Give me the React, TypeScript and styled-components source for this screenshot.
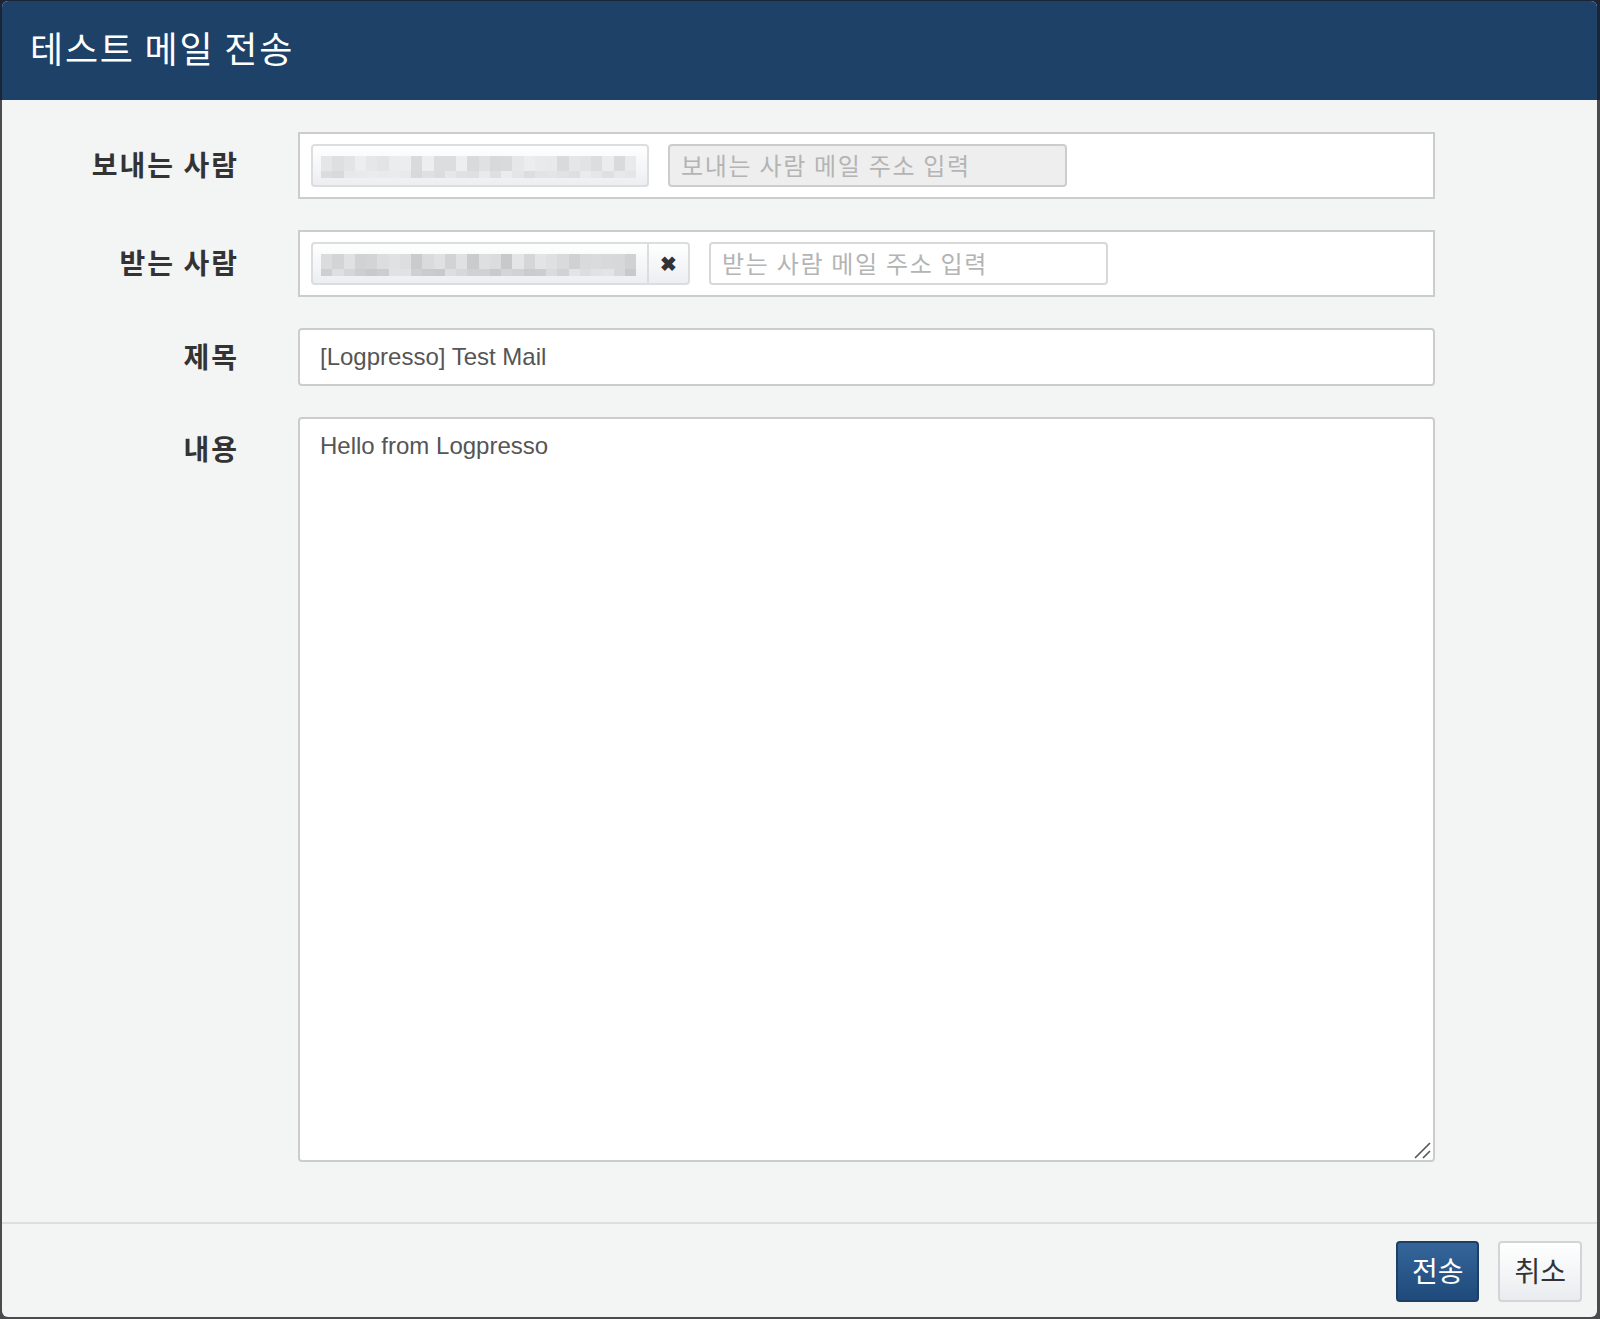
import React from 'react'
import styled, { createGlobalStyle } from 'styled-components'

const GlobalStyle = createGlobalStyle`
  html, body {
    margin: 0;
    padding: 0;
    background: #3b3d40;
  }
  body {
    font-family: "Liberation Sans", "Noto Sans CJK KR", sans-serif;
  }
`

const Backdrop = styled.div`
  width: 1600px;
  height: 1319px;
  padding: 1px 3px 2px 2px;
  box-sizing: border-box;
  background: linear-gradient(#1b2533 0 100px, #4a4b4d 100px);
`

const Modal = styled.div`
  width: 1595px;
  height: 1316px;
  border-radius: 6px;
  overflow: hidden;
  background: #f3f4f4;
  display: flex;
  flex-direction: column;
`

const Header = styled.div`
  height: 99px;
  flex: none;
  background: #1e4168;
  display: flex;
  align-items: center;
  padding-left: 28px;
  padding-bottom: 8px;
  box-sizing: border-box;
`

const Title = styled.h1`
  margin: 0;
  font-family: "Noto Sans CJK KR", sans-serif;
  font-size: 36px;
  font-weight: 400;
  color: #ffffff;
  letter-spacing: 1.8px;
`

const Body = styled.div`
  flex: 1;
  padding-top: 32px;
`

const Form = styled.div`
  display: grid;
  grid-template-columns: 235px 1137px;
  column-gap: 61px;
  row-gap: 31px;
`

const Label = styled.label<{ $top?: boolean }>`
  font-family: "Noto Sans CJK KR", sans-serif;
  font-size: 28px;
  font-weight: 700;
  color: #333333;
  text-align: right;
  line-height: 58px;
  letter-spacing: 2px;
  margin-right: -2px;
  align-self: ${(p) => (p.$top ? 'start' : 'center')};
  margin-top: ${(p) => (p.$top ? '2px' : '-3px')};
`

const TagBox = styled.div`
  height: 67px;
  box-sizing: border-box;
  border: 2px solid #cccccc;
  background: #ffffff;
  padding: 10px 11px;
  display: flex;
  align-items: center;
`

const Tag = styled.div<{ $removable?: boolean }>`
  width: 338px;
  height: 43px;
  box-sizing: border-box;
  border: 2px solid #dcdddf;
  border-radius: ${(p) => (p.$removable ? '4px 0 0 4px' : '4px')};
  background: linear-gradient(#ffffff, #eceef1);
  padding: 10px 11px 0 8px;
`

const Mosaic = styled.div`
  display: grid;
  grid-template-columns: repeat(28, 1fr);
  grid-template-rows: 15px 7px;
  width: 315px;
`

const Cell = styled.div<{ $shade: number }>`
  background: ${(p) => `rgb(${p.$shade}, ${p.$shade + 1}, ${p.$shade + 3})`};
`

const RemoveButton = styled.button`
  width: 41px;
  height: 43px;
  box-sizing: border-box;
  border: 2px solid #dcdddf;
  border-left: none;
  border-radius: 0 4px 4px 0;
  background: linear-gradient(#ffffff, #eceef1);
  color: #333333;
  font-size: 20px;
  font-weight: 700;
  padding: 0;
  display: flex;
  align-items: center;
  justify-content: center;
`

const AddressInput = styled.input<{ $disabled?: boolean }>`
  width: 399px;
  height: 43px;
  margin-left: 19px;
  box-sizing: border-box;
  border: 2px solid ${(p) => (p.$disabled ? '#cccccc' : '#d8d8d8')};
  border-radius: 4px;
  background: ${(p) => (p.$disabled ? '#eeeeee' : '#ffffff')};
  padding: 0 11px 3px;
  font-family: "Noto Sans CJK KR", sans-serif;
  font-size: 24px;
  letter-spacing: 1.7px;
  outline: none;

  &::placeholder {
    color: #b4b4b4;
  }
`

const TextInput = styled.input`
  height: 58px;
  box-sizing: border-box;
  border: 2px solid #cccccc;
  border-radius: 4px;
  background: #ffffff;
  padding: 0 20px;
  font-family: "Liberation Sans", "Noto Sans CJK KR", sans-serif;
  font-size: 24px;
  color: #555555;
  outline: none;
`

const TextAreaWrap = styled.div`
  position: relative;
  display: flex;
`

const TextArea = styled.textarea`
  flex: 1;
  height: 745px;
  box-sizing: border-box;
  border: 2px solid #cccccc;
  border-radius: 4px;
  background: #ffffff;
  padding: 12px 20px;
  font-family: "Liberation Sans", "Noto Sans CJK KR", sans-serif;
  font-size: 24px;
  line-height: 30px;
  color: #555555;
  outline: none;
  resize: none;
`

const ResizeGrip = styled.svg`
  position: absolute;
  right: 4px;
  bottom: 3px;
  width: 18px;
  height: 18px;
  pointer-events: none;
`

const Footer = styled.div`
  flex: none;
  border-top: 2px solid #dcdedf;
  padding: 17px 15px 15px;
  display: flex;
  justify-content: flex-end;
  gap: 19px;
`

const Button = styled.button<{ $primary?: boolean }>`
  height: 61px;
  box-sizing: border-box;
  padding: 0 14px 3px;
  border-radius: 4px;
  border: 2px solid ${(p) => (p.$primary ? '#1d3f66' : '#d2d4d6')};
  background: ${(p) =>
    p.$primary
      ? 'linear-gradient(#35659a, #1f4a7b)'
      : 'linear-gradient(#ffffff, #e9ecef)'};
  color: ${(p) => (p.$primary ? '#ffffff' : '#333333')};
  font-family: "Noto Sans CJK KR", sans-serif;
  font-size: 28px;
  line-height: 1;
`

// deterministic shades for the blurred address
const makeShades = (seed: number, base: number, spread: number) => {
  let s = seed
  const out: number[] = []
  for (let i = 0; i < 56; i++) {
    s = (s * 1103515245 + 12345) % 2147483648
    out.push(base + Math.floor((s / 2147483648) * spread))
  }
  return out
}

const senderShades = makeShades(7, 216, 22)
const recipientShades = makeShades(11, 200, 30)

const BlurredAddress = ({ shades }: { shades: number[] }) => (
  <Mosaic>
    {shades.map((shade, i) => (
      <Cell key={`cell-${i}`} $shade={shade} />
    ))}
  </Mosaic>
)

const App = () => (
  <>
    <GlobalStyle />
    <Backdrop>
      <Modal>
        <Header>
          <Title>테스트 메일 전송</Title>
        </Header>
        <Body>
          <Form>
            <Label>보내는 사람</Label>
            <TagBox>
              <Tag>
                <BlurredAddress shades={senderShades} />
              </Tag>
              <AddressInput $disabled disabled placeholder="보내는 사람 메일 주소 입력" />
            </TagBox>

            <Label>받는 사람</Label>
            <TagBox>
              <Tag $removable>
                <BlurredAddress shades={recipientShades} />
              </Tag>
              <RemoveButton>✖</RemoveButton>
              <AddressInput placeholder="받는 사람 메일 주소 입력" />
            </TagBox>

            <Label>제목</Label>
            <TextInput defaultValue="[Logpresso] Test Mail" />

            <Label $top>내용</Label>
            <TextAreaWrap>
              <TextArea defaultValue="Hello from Logpresso" />
              <ResizeGrip viewBox="0 0 18 18">
                <path d="M2 17 L17 2 M10 17 L17 10" stroke="#555" strokeWidth="1.6" fill="none" />
              </ResizeGrip>
            </TextAreaWrap>
          </Form>
        </Body>
        <Footer>
          <Button $primary>전송</Button>
          <Button>취소</Button>
        </Footer>
      </Modal>
    </Backdrop>
  </>
)

export default App
